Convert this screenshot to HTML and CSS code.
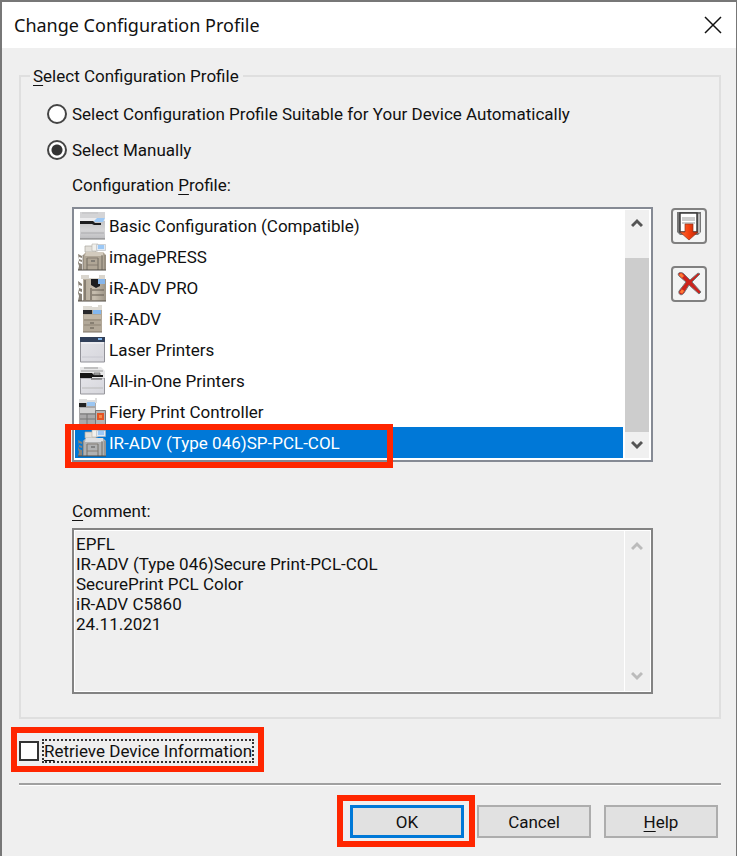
FILE: index.html
```
<!DOCTYPE html>
<html lang="en">
<head>
<meta charset="utf-8">
<title>Change Configuration Profile</title>
<link rel="stylesheet" href="styles.css">
</head>
<body>
<svg class="defs" aria-hidden="true">
  <defs>
    <linearGradient id="beige" x1="0" x2="1" y1="0" y2="0"><stop offset="0" stop-color="#b5ab9b"/><stop offset=".5" stop-color="#c6bdae"/><stop offset="1" stop-color="#9d9587"/></linearGradient>
    <linearGradient id="silver" x1="0" x2="0" y1="0" y2="1"><stop offset="0" stop-color="#c4c4c6"/><stop offset=".5" stop-color="#d6d6d8"/><stop offset="1" stop-color="#bdbdc0"/></linearGradient>
    <linearGradient id="pale" x1="0" x2="1" y1="0" y2="1"><stop offset="0" stop-color="#e4e4e9"/><stop offset="1" stop-color="#d6d6dc"/></linearGradient>
    <linearGradient id="arrow" x1="0" x2="1" y1="0" y2="0"><stop offset="0" stop-color="#ff6a32"/><stop offset=".5" stop-color="#f4400f"/><stop offset="1" stop-color="#b92508"/></linearGradient>
    <symbol id="press" viewBox="0 0 28 28">
      <path d="M5 12 8 9h17l3 3v15H5z" fill="var(--body)"/>
      <path d="M7 3h11v6H7z" fill="#e2dfd9" stroke="#aaa69e" stroke-width=".7"/>
      <path d="M14 1h6v7h-6z" fill="#f1f0ec" stroke="#b5b2ac" stroke-width=".6"/>
      <path d="M18.500 1.500h9v6h-9z" fill="#dfe9f4" stroke="#b8b8b8" stroke-width=".6"/>
      <path d="M20 2h6v4h-6z" fill="#9cc8f5"/>
      <path d="M8 9h17v4H7z" fill="var(--light)"/>
      <path d="M9 15v12M20 15v12M24 12v15" stroke="#665f56" stroke-width=".8"/>
      <path d="M9 15h11M9 22h11" stroke="#7d756a" stroke-width=".8"/>
      <path d="M13 18h4" stroke="#555"/>
      <path d="M0 11l4 2v2l-3-1v2l3 1v2l-3-1v2l3 1v6H0l1-4-1-3 1-3z" fill="#8b8378"/>
      <path d="M0 27h28" stroke="#4f4b45"/>
      <path d="M5 12v15M27 12v15" stroke="#777066" stroke-width=".8"/>
    </symbol>
  </defs>
</svg>

<main class="dialog">
  <header class="titlebar">
    <h1>Change Configuration Profile</h1>
    <button class="close" type="button" aria-label="Close">
      <svg width="18" height="18" viewBox="0 0 18 18"><path d="M1 1 17 17M17 1 1 17" stroke="#111" stroke-width="1.5"/></svg>
    </button>
  </header>

  <form class="content">
    <fieldset class="group">
      <legend><u>S</u>elect Configuration Profile</legend>

      <label class="option"><input type="radio" name="mode">Select Configuration Profile Suitable for Your Device Automatically</label>
      <label class="option"><input type="radio" name="mode" checked>Select Manually</label>

      <div class="manual">
        <div class="caption" id="profile-label">Configuration <u>P</u>rofile:</div>
        <div class="profile-row">
          <div class="listbox">
            <ul class="items" role="listbox" aria-labelledby="profile-label">
              <li role="option">
                <svg class="icon" viewBox="0 0 28 28"><path d="M2 9h25v18H2z" fill="url(#silver)"/><path d="M2 0h25v7H2z" fill="#d4d4d6"/><path d="M4 1h16" stroke="#c0c0c2"/><path d="M2 6h25v3H2z" fill="#ececee"/><path d="M2 9h13l2 2h6v2h-7l-2-1H2z" fill="#1d1d1f"/><path d="M16 9l3-3h8l-2 4h-8z" fill="#9cc8f5"/><path d="M3 21h23" stroke="#aaaaad"/><path d="M2 27h25" stroke="#777"/></svg>
                Basic Configuration (Compatible)
              </li>
              <li role="option"><svg class="icon beige"><use href="#press"/></svg>imagePRESS</li>
              <li role="option">
                <svg class="icon" viewBox="0 0 28 28"><path d="M5 5h23v22H5z" fill="url(#beige)"/><path d="M3 1h8v3h10V1h6v4H3z" fill="#dad6ce"/><path d="M13 5h9v7l-4 2-5-3z" fill="#1c1d20"/><path d="M20 5h7v5h-7z" fill="#86b6ec"/><path d="M13 14v12M7 6v20" stroke="#574f45"/><path d="M14 16h12M14 21h12" stroke="#655d52"/><path d="M0 7l4 3v2l-3-1v3l3 1v3l-3-1v2l3 1v7H0l1-5-1-3 1-4z" fill="#878076"/><path d="M0 27h28" stroke="#504a42"/></svg>
                iR-ADV PRO
              </li>
              <li role="option">
                <svg class="icon" viewBox="0 0 28 28"><path d="M5 4h19v23H5z" fill="#b2a898"/><path d="M5 1h9v1h6V0h4v5H5z" fill="#dedbd4"/><path d="M5 5h9v4H5z" fill="#27272a"/><path d="M15 5h8v4h-8z" fill="#83b7ef"/><path d="M6 10h17v4H6z" fill="#c1b7a7"/><path d="M6 15h17M6 20h17" stroke="#8d8375"/><path d="M12 18h4M12 23h4" stroke="#5c564d"/><path d="M5 27h19" stroke="#7d7366"/></svg>
                iR-ADV
              </li>
              <li role="option">
                <svg class="icon" viewBox="0 0 28 28"><path d="M2.500 5h24v21h-24z" fill="url(#pale)" stroke="#929299"/><path d="M2 1h25v5H2z" fill="#31405a"/><path d="M20 2h4v2h-4z" fill="#7fb2e8"/><path d="M3 7h23" stroke="#f7f7fa"/><path d="M4 21h21" stroke="#c8c8d0"/></svg>
                Laser Printers
              </li>
              <li role="option">
                <svg class="icon" viewBox="0 0 28 28"><path d="M2.500 11h24v16h-24z" fill="url(#pale)" stroke="#96969c"/><path d="M2 0h21l4 4v7H2z" fill="#e8e8e9"/><path d="M6 1h14M3 4h22" stroke="#999"/><path d="M2 6h12l2 2h9v2H14v1H2z" fill="#161616"/><path d="M16 6h6v2h-6z" fill="#bbb" stroke="#555" stroke-width=".7"/><path d="M13 12h11" stroke="#555"/><path d="M4 21h21" stroke="#bbb"/></svg>
                All-in-One Printers
              </li>
              <li role="option">
                <svg class="icon" viewBox="0 0 28 28"><path d="M1 5h17v22H1z" fill="#aaa9aa"/><path d="M1 1h8v1h8V0h2v5H1z" fill="#ddd"/><path d="M1 5h7v4H1z" fill="#222"/><path d="M9 4h8v4H9z" fill="#9bc6f2"/><path d="M2 10h15v5H2z" fill="#d1d1d1"/><path d="M2 16h15M2 21h15M9 16v10" stroke="#777"/><path d="M17.500 12.500h10v14h-10z" fill="#b5b5b5" stroke="#777"/><path d="M19 15h7v7h-7z" fill="#e35324"/><path d="M21 17h3v3h-3z" fill="#f78a45"/><path d="M0 27h28" stroke="#555"/></svg>
                Fiery Print Controller
              </li>
              <li class="selected" role="option" aria-selected="true"><svg class="icon gray"><use href="#press"/></svg>IR-ADV (Type 046)SP-PCL-COL</li>
            </ul>
            <div class="scrollbar">
              <button type="button" aria-label="Scroll list up"><svg width="12" height="10" viewBox="0 0 12 10"><path d="M1 8 6 3l5 5" /></svg></button>
              <div class="track"><div class="thumb"></div></div>
              <button type="button" aria-label="Scroll list down"><svg width="12" height="10" viewBox="0 0 12 10"><path d="M1 2 6 7l5-5" /></svg></button>
            </div>
          </div>
          <div class="tools">
            <button type="button" aria-label="Import profile">
              <svg width="32" height="32" viewBox="0 0 32 32"><path d="M4 2h24v20l-3 3H7l-3-3z" fill="#777"/><path d="M7 3h17v19H7z" fill="#fff" stroke="#3c3c3c" stroke-width="1.5"/><path d="M25 4v19h2V4z" fill="#b6b6b6"/><path d="M9 8h13M9 10h13M9 13h13" stroke="#999"/><path d="M12 14h8v8h5l-9 8-9-8h5z" fill="url(#arrow)" stroke="#8e351f" stroke-width=".7"/></svg>
            </button>
            <button type="button" aria-label="Delete profile">
              <svg width="32" height="32" viewBox="0 0 32 32"><path d="M5 6c1-2 4-2 6 0l6 6 8-7 2 1-8 8 9 10-2 2-10-9-5 8c-2 3-6 2-5-2l7-9-7-6z" fill="#cc231c" stroke="#777" stroke-width="1"/><path d="M7 6l3 3M8 25l2-3" stroke="#ff7935" stroke-width="3"/></svg>
            </button>
          </div>
        </div>

        <label class="caption comment-label" for="comment"><u>C</u>omment:</label>
        <div class="comment-box">
          <textarea id="comment" readonly>EPFL
IR-ADV (Type 046)Secure Print-PCL-COL
SecurePrint PCL Color
iR-ADV C5860
24.11.2021</textarea>
          <div class="scrollbar disabled">
            <button type="button" disabled aria-label="Scroll comment up"><svg width="12" height="10" viewBox="0 0 12 10"><path d="M1 8 6 3l5 5" /></svg></button>
            <div class="track"></div>
            <button type="button" disabled aria-label="Scroll comment down"><svg width="12" height="10" viewBox="0 0 12 10"><path d="M1 2 6 7l5-5" /></svg></button>
          </div>
        </div>
      </div>
    </fieldset>

    <label class="retrieve"><input type="checkbox"><span><u>R</u>etrieve Device Information</span></label>

    <hr>

    <footer class="actions">
      <div class="marked"><button class="default" type="button">OK</button></div>
      <button type="button">Cancel</button>
      <button type="button"><u>H</u>elp</button>
    </footer>
  </form>
</main>
</body>
</html>
```
FILE: styles.css
```
* { box-sizing: border-box; }

body {
  margin: 0;
  background: #efefef;
  color: #111;
  font: 17px/24px Roboto, "Liberation Sans", sans-serif;
}

.defs { position: absolute; width: 0; height: 0; }

u {
  text-decoration-thickness: 1px;
  text-underline-offset: 3px;
  text-decoration-skip-ink: none;
}

button { font: inherit; color: inherit; padding: 0; }

.dialog {
  min-height: 100vh;
  border: solid #777;
  border-width: 2px 1px 0 2px;
}

.titlebar {
  display: flex;
  align-items: center;
  justify-content: space-between;
  height: 46px;
  padding: 0 14px 0 12px;
  background: #fff;
}

.titlebar h1 {
  margin: 0;
  font: 18px/24px "Noto Sans", "Open Sans", sans-serif;
}

.close {
  display: flex;
  border: 0;
  background: none;
}

.content { padding: 16px 15px 18px 17px; }

.group {
  min-width: 0;
  margin: 0;
  padding: 14px 12px 23px 26px;
  border: 2px solid #dfdfdf;
}

legend {
  margin-left: -17px;
  padding: 0 4px 0 3px;
}

.option {
  display: flex;
  align-items: center;
  gap: 5px;
  margin-bottom: 12px;
}

.option input {
  appearance: none;
  width: 20px;
  height: 20px;
  margin: 0;
  border: 2px solid #444;
  border-radius: 50%;
  background: #fff;
}

.option input:checked { background: radial-gradient(circle, #333 5px, #fff 6px); }

.manual { margin-left: 25px; }

.caption { display: block; margin: -1px 0 10px; }

.profile-row { display: flex; gap: 18px; }

.listbox {
  display: flex;
  flex: 1;
  gap: 2px;
  padding: 1px 2px 2px 1px;
  border: 2px solid #858a94;
  background: #fff;
}

.items {
  flex: 1;
  margin: 0;
  padding: 0;
  list-style: none;
}

.items li {
  display: flex;
  align-items: center;
  gap: 3px;
  height: 31px;
  padding-left: 3px;
}

.icon { width: 28px; height: 28px; }
.beige { --body: #b0a696; --light: #d2cabd; }
.gray { --body: #b0b1b2; --light: #dedfe1; }

.items .selected {
  position: relative;
  background: #0078d7;
  color: #fff;
}

/* Callout outlines around the controls to use */
.selected::after,
.retrieve::after,
.marked::after {
  content: "";
  position: absolute;
  border: 6px solid #ff2600;
  pointer-events: none;
}

.selected::after {
  top: -3px;
  bottom: -10px;
  left: -10px;
  width: 316px;
}

.scrollbar {
  display: flex;
  flex-direction: column;
  width: 24px;
  background: #f0f0f0;
}

.scrollbar button {
  display: flex;
  align-items: center;
  justify-content: center;
  height: 26px;
  border: 0;
  background: none;
}

.scrollbar path { fill: none; stroke: #555; stroke-width: 3; }
.disabled path { stroke: #bbb; }

.track { flex: 1; padding-top: 22px; }
.thumb { height: 100%; background: #cdcdcd; }

.tools {
  display: flex;
  flex-direction: column;
  gap: 22px;
  padding-top: 1px;
}

.tools button {
  display: flex;
  width: 36px;
  height: 36px;
  border: 2px solid #808080;
  border-radius: 4px;
  background: #f3f4f4;
}

.comment-label { margin: 37px 0 5px; }

.comment-box {
  display: flex;
  height: 166px;
  margin-right: 54px;
  border: 2px solid #838383;
  outline: 1px solid #fff;
  outline-offset: -3px;
}

.comment-box textarea {
  flex: 1;
  min-width: 0;
  padding: 4px 2px;
  border: 0;
  border-right: 1px solid #fff;
  outline: 0;
  resize: none;
  overflow: hidden;
  background: transparent;
  color: inherit;
  font: inherit;
  line-height: 20px;
}

.comment-box .scrollbar { width: 26px; padding: 3px 2px 3px 0; background: none; }

.retrieve {
  position: relative;
  display: flex;
  align-items: center;
  gap: 3px;
  width: fit-content;
  margin-top: 20px;
}

.retrieve input {
  appearance: none;
  width: 20px;
  height: 20px;
  margin: 0;
  border: 2px solid #333;
  background: #fff;
}

.retrieve span { outline: 2px dotted #333; outline-offset: -2px; padding: 0 2px; }
.retrieve::after { inset: -12px -10px -9px -8px; }

hr {
  height: 3px;
  margin: 20px 0 19px;
  border: 0;
  border-top: 2px solid #a0a0a0;
  background: #fff;
}

.actions {
  display: flex;
  justify-content: flex-end;
  gap: 13px;
  padding-right: 3px;
}

.actions button {
  width: 114px;
  height: 33px;
  border: 2px solid #adadad;
  background: #e1e1e1;
}

.marked { position: relative; display: flex; }
.marked::after { inset: -10px -11px -9px -13px; }
.actions .default { border: 3px solid #0078d7; }
```
